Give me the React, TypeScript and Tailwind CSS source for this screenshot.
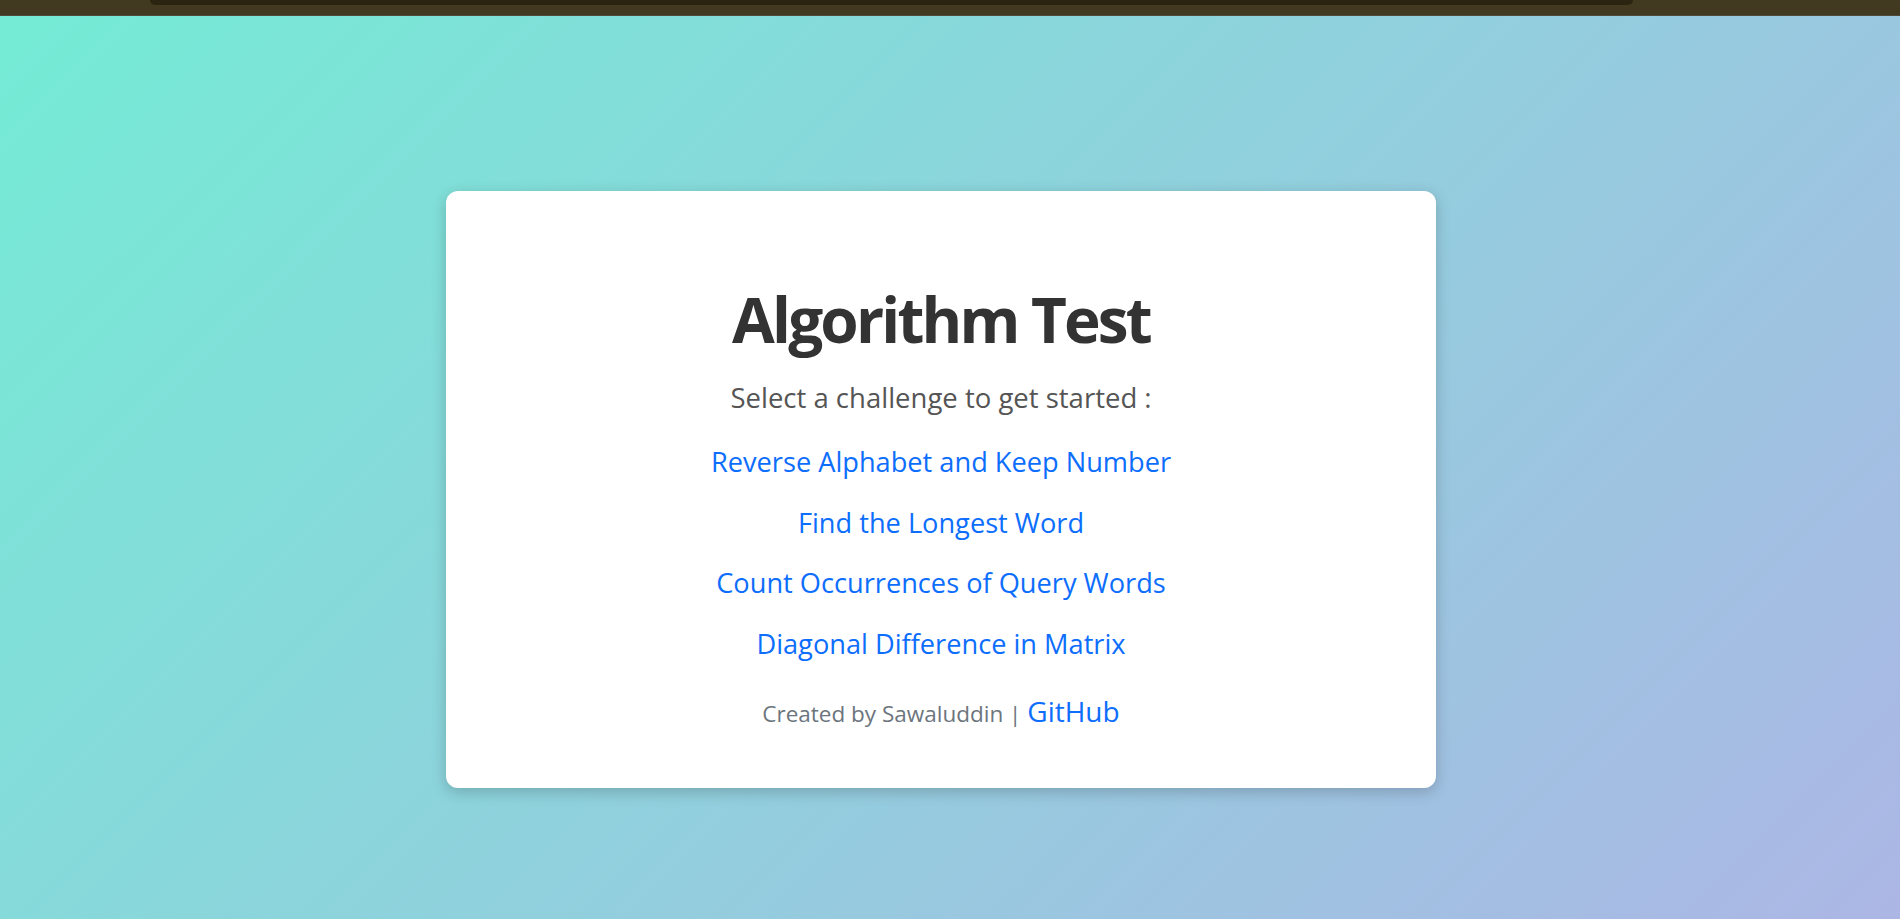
const challenges = [
  'Reverse Alphabet and Keep Number',
  'Find the Longest Word',
  'Count Occurrences of Query Words',
  'Diagonal Difference in Matrix',
]

function TopBar() {
  return (
    <div className="h-4 shrink-0 bg-[#413a20] border-b border-[#4d4a3c] flex justify-center">
      <div className="h-[5px] w-[1483px] ml-[-117px] rounded-b-[8px] bg-[#2b2410]" />
    </div>
  )
}

export default function App() {
  return (
    <div className="min-h-screen flex flex-col font-['Open_Sans','Noto_Sans',sans-serif]">
      <TopBar />
      <main className="flex-1 flex justify-center items-start pr-[18px] pt-[175px] bg-linear-[135deg] from-[#74ebd5] to-[#acb6e5]">
        <div className="w-[990px] h-[597px] bg-white rounded-xl shadow-[0_4px_15px_rgba(0,0,0,0.2)] flex flex-col items-center pt-[90px]">
          <h1 className="text-[62px] leading-[77px] font-bold tracking-[-2.8px] text-[#333]">Algorithm Test</h1>
          <p className="mt-5 text-[27.5px] leading-[40px] text-[#555]">Select a challenge to get started :</p>
          <ul className="mt-[23px] flex flex-col items-center gap-[18.5px]">
            {challenges.map((c) => (
              <li key={c}>
                <a href="#" className="block text-[27.2px] leading-[42px] text-[#0d6efd] hover:underline">
                  {c}
                </a>
              </li>
            ))}
          </ul>
          <p className="mt-[28px] text-[22.5px] leading-[36px] text-[#6c757d]">
            Created by Sawaluddin |{' '}
            <a href="#" className="text-[28px] text-[#0d6efd] hover:underline">
              GitHub
            </a>
          </p>
        </div>
      </main>
    </div>
  )
}
